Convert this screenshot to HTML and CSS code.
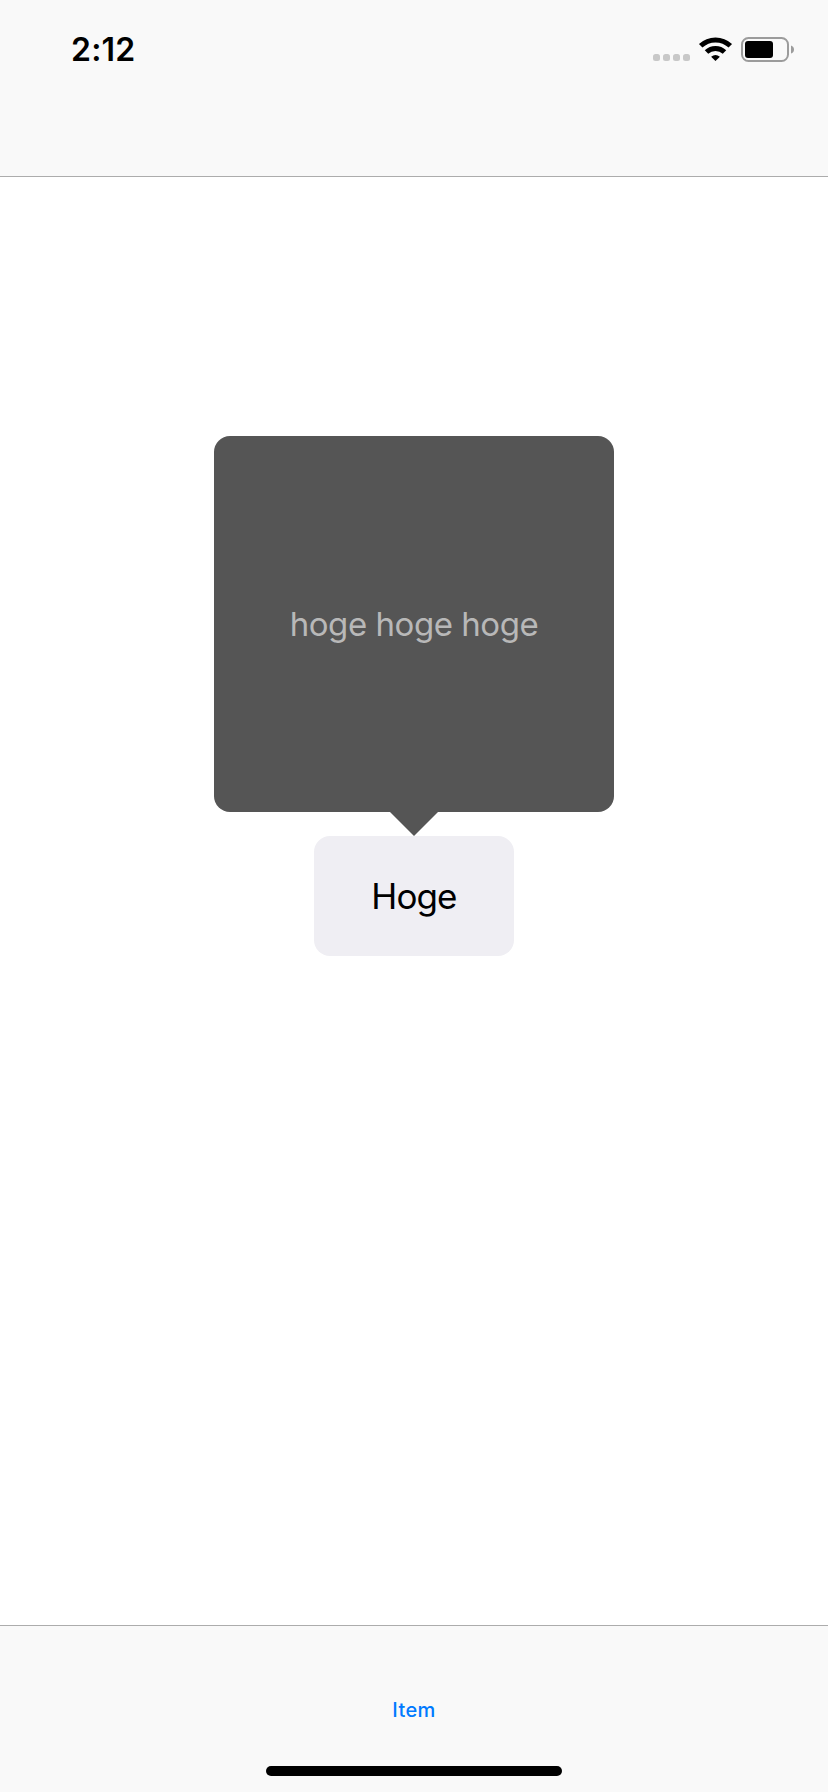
FILE: index.html
```html
<!DOCTYPE html>
<html lang="en">
<head>
<meta charset="utf-8">
<title>Popover</title>
<link rel="stylesheet" href="styles.css">
</head>
<body>
<header class="header">
  <div class="time">2:12</div>
  <svg class="status" width="148" height="32" viewBox="0 0 148 32">
    <g fill="#c8c8c8">
      <rect x="5" y="21" width="7" height="7" rx="2.5"/>
      <rect x="15" y="21" width="7" height="7" rx="2.5"/>
      <rect x="25" y="21" width="7" height="7" rx="2.5"/>
      <rect x="35" y="21" width="7" height="7" rx="2.5"/>
    </g>
    <g fill="none" stroke="#000" stroke-width="5">
      <path d="M52.7 12.8A21.5 21.5 0 0 1 82.3 12.8"/>
      <path d="M58.5 19A13 13 0 0 1 76.5 19"/>
    </g>
    <path d="M67.5 28L63.1 23.7Q67.5 20.4 71.9 23.7Z"/>
    <rect x="94" y="5" width="46" height="23" rx="6.5" fill="none" stroke="#9c9c9c" stroke-width="2"/>
    <rect x="97" y="8" width="28" height="17" rx="3"/>
    <path d="M143 12.5Q146 13.5 146 16.5T143 20.5Z" fill="#9c9c9c"/>
  </svg>
</header>
<main class="content">
  <div class="bubble">hoge hoge hoge</div>
  <svg class="arrow" width="48" height="24" viewBox="0 0 48 24"><path d="M0 0H48L24 24Z" fill="#555"/></svg>
  <button class="anchor">Hoge</button>
</main>
<footer class="toolbar">
  <a class="item">Item</a>
  <div class="home"></div>
</footer>
</body>
</html>
```
FILE: styles.css
```css
* {
  box-sizing: border-box;
}

body {
  margin: 0;
  width: 828px;
  height: 1792px;
  display: flex;
  flex-direction: column;
  background: #fff;
  font-family: Inter, "Liberation Sans", sans-serif;
}

.header {
  height: 177px;
  flex: none;
  display: flex;
  justify-content: space-between;
  align-items: flex-start;
  padding: 33px 32px 0 71px;
  background: #f9f9f9;
  border-bottom: 1px solid #acacac;
}

.time {
  font-size: 32px;
  font-weight: 600;
  line-height: 34px;
  letter-spacing: 0.2px;
}

.status {
  display: block;
}

.content {
  flex: 1;
  display: flex;
  flex-direction: column;
  align-items: center;
  padding-top: 259px;
}

.bubble {
  width: 400px;
  height: 376px;
  flex: none;
  display: flex;
  align-items: center;
  justify-content: center;
  border-radius: 16px;
  background: #555;
  color: #b8b8b8;
  font-size: 33px;
  letter-spacing: -0.45px;
  white-space: nowrap;
}

.arrow {
  display: block;
}

.anchor {
  width: 200px;
  height: 120px;
  padding: 0;
  border: 0;
  border-radius: 16px;
  background: #efeef3;
  color: #000;
  font-family: inherit;
  font-size: 35px;
  letter-spacing: -0.9px;
}

.toolbar {
  height: 167px;
  flex: none;
  display: flex;
  flex-direction: column;
  align-items: center;
  justify-content: space-between;
  padding: 72px 0 16px;
  background: #f9f9f9;
  border-top: 1px solid #acacac;
}

.item {
  color: #007aff;
  font-size: 20px;
  font-weight: 500;
  line-height: 24px;
  letter-spacing: 0.4px;
}

.home {
  width: 296px;
  height: 10px;
  border-radius: 5px;
  background: #000;
}
```
